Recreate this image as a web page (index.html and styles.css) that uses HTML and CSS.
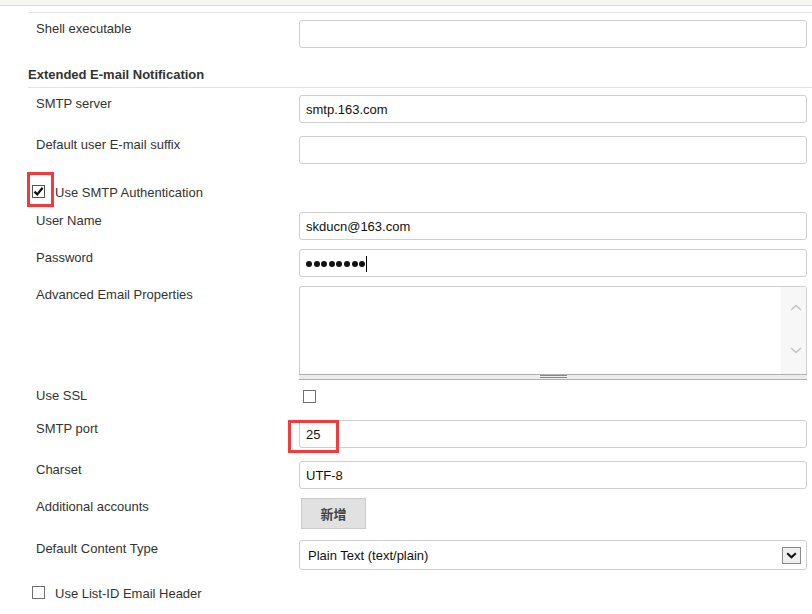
FILE: index.html
```html
<!DOCTYPE html>
<html lang="en">
<head>
<meta charset="utf-8">
<title>Extended E-mail Notification</title>
<link rel="stylesheet" href="styles.css">
</head>
<body>
<div class="page">
  <div class="topbar"></div>
  <div class="form">
    <div class="rule"></div>

    <div class="row row-shell">
      <div class="label">Shell executable</div>
      <div class="field"></div>
    </div>

    <div class="section">Extended E-mail Notification</div>

    <div class="row row-smtp">
      <div class="label">SMTP server</div>
      <div class="field">smtp.163.com</div>
    </div>

    <div class="row row-gap13">
      <div class="label">Default user E-mail suffix</div>
      <div class="field"></div>
    </div>

    <div class="check-row row-auth">
      <span class="box checked">
        <svg width="11" height="11" viewBox="0 0 11 11"><path d="M1.5 5.6 L4.3 8.4 L9.6 1.8" fill="none" stroke="#111" stroke-width="2.2"/></svg>
      </span>
      <span class="check-label">Use SMTP Authentication</span>
    </div>

    <div class="row row-user">
      <div class="label">User Name</div>
      <div class="field">skducn@163.com</div>
    </div>

    <div class="row row-gap9">
      <div class="label">Password</div>
      <div class="field">
        <span class="dots"><i></i><i></i><i></i><i></i><i></i><i></i><i></i><i></i></span><span class="caret"></span>
      </div>
    </div>

    <div class="row row-gap9">
      <div class="label">Advanced Email Properties</div>
      <div class="textarea">
        <div class="ta-body">
          <div class="ta-scroll">
            <svg class="chev-up" width="12" height="7" viewBox="0 0 12 7"><path d="M1 6 L6 1.5 L11 6" fill="none" stroke="#c4c4c4" stroke-width="1.6"/></svg>
            <svg class="chev-down" width="12" height="7" viewBox="0 0 12 7"><path d="M1 1 L6 5.5 L11 1" fill="none" stroke="#c4c4c4" stroke-width="1.6"/></svg>
          </div>
        </div>
        <div class="ta-grip"><span></span></div>
      </div>
    </div>

    <div class="row row-ssl">
      <div class="label">Use SSL</div>
      <div class="ctl"><span class="box ssl-box"></span></div>
    </div>

    <div class="row row-port">
      <div class="label">SMTP port</div>
      <div class="field">25</div>
    </div>

    <div class="row row-gap13">
      <div class="label">Charset</div>
      <div class="field">UTF-8</div>
    </div>

    <div class="row row-gap9">
      <div class="label">Additional accounts</div>
      <div class="ctl"><span class="button">新增</span></div>
    </div>

    <div class="row row-select">
      <div class="label">Default Content Type</div>
      <div class="select">
        <span>Plain Text (text/plain)</span>
        <span class="sel-arrow">
          <svg width="11" height="7" viewBox="0 0 11 7"><path d="M1.2 1.2 L5.5 5.3 L9.8 1.2" fill="none" stroke="#111" stroke-width="2"/></svg>
        </span>
      </div>
    </div>

    <div class="check-row row-listid">
      <span class="box"></span>
      <span class="check-label">Use List-ID Email Header</span>
    </div>
  </div>

  <div class="mark mark-auth"></div>
  <div class="mark mark-port"></div>
</div>
</body>
</html>
```

FILE: styles.css
```css
html, body {
  margin: 0;
  padding: 0;
  background: #fff;
}

body {
  font-family: "Liberation Sans", Arial, "Noto Sans CJK SC", sans-serif;
  font-size: 13px;
  color: #333;
}

.page {
  position: relative;
  width: 812px;
  height: 614px;
  overflow: hidden;
}

.topbar {
  height: 5px;
  background: #f6f8f0;
  border-bottom: 1px solid #dcdcdc;
}

.form {
  display: flex;
  flex-direction: column;
  padding-left: 28px;
}

.rule {
  margin-top: 6px;
  border-top: 1px solid #e3e3e3;
}

.row {
  display: grid;
  grid-template-columns: 271px 508px;
  align-items: start;
}

.label {
  padding: 1px 0 0 8px;
  line-height: 15px;
  color: #333;
}

.field {
  box-sizing: border-box;
  height: 28px;
  border: 1px solid #cfcfcf;
  border-radius: 3px;
  padding: 1px 6px 0 6px;
  display: flex;
  align-items: center;
  color: #111;
  background: #fff;
  line-height: 15px;
}

.row-shell { margin-top: 7px; }
.row-smtp { margin-top: 7px; }
.row-gap13 { margin-top: 13px; }
.row-gap9 { margin-top: 9px; }
.row-select { margin-top: 11px; }
.row-user { margin-top: 13px; }
.row-ssl { margin-top: 7px; }
.row-port { margin-top: 17px; }

.section {
  padding: 19px 0 5px 0;
  line-height: 15px;
  font-weight: bold;
  color: #333;
  border-bottom: 1px solid #e3e3e3;
}

.check-row {
  display: flex;
  align-items: center;
  height: 15px;
  padding-left: 4px;
  line-height: 15px;
}

.row-auth { margin-top: 20px; }
.row-listid { margin-top: 15px; }

.check-label {
  margin-left: 10px;
  padding-top: 1px;
  color: #333;
}

.box {
  box-sizing: border-box;
  width: 13px;
  height: 13px;
  border: 1px solid #707070;
  background: #fff;
  display: inline-flex;
  align-items: center;
  justify-content: center;
  flex: none;
}

.box.checked {
  border-color: #555;
}

.ctl {
  display: flex;
}

.ssl-box {
  margin: 3px 0 0 4px;
}

.dots {
  display: inline-flex;
  gap: 1.6px;
}

.dots i {
  display: block;
  width: 6px;
  height: 6px;
  border-radius: 50%;
  background: #111;
}

.caret {
  display: inline-block;
  width: 1px;
  height: 16px;
  background: #000;
  margin-left: 1px;
}

.textarea {
  box-sizing: border-box;
  height: 94px;
  border: 1px solid #cfcfcf;
  border-bottom: none;
  border-radius: 3px 3px 0 0;
  display: flex;
  flex-direction: column;
  background: #fff;
}

.ta-body {
  flex: 1;
  display: flex;
  justify-content: flex-end;
}

.ta-scroll {
  width: 25px;
  background: #f7f7f7;
  display: flex;
  flex-direction: column;
  align-items: center;
}

.chev-up {
  margin-top: 17px;
  margin-left: 4px;
}

.chev-down {
  margin-top: 36px;
  margin-left: 4px;
}

.ta-grip {
  box-sizing: border-box;
  height: 6px;
  margin: 0 -1px;
  background: #ececec;
  border-top: 1px solid #b0b0b0;
  border-bottom: 1px solid #b0b0b0;
  display: flex;
  justify-content: center;
}

.ta-grip span {
  display: block;
  width: 27px;
  height: 3px;
  box-sizing: border-box;
  border-top: 1px solid #888;
  border-bottom: 1px solid #888;
}

.button {
  box-sizing: border-box;
  width: 65px;
  height: 31px;
  margin-left: 2px;
  background: #e1e1e1;
  border: 1px solid #cbcbcb;
  color: #444;
  font-family: "Noto Sans CJK SC", "Liberation Sans", sans-serif;
  font-size: 13px;
  font-weight: bold;
  display: flex;
  align-items: center;
  justify-content: center;
}

.select {
  box-sizing: border-box;
  height: 30px;
  border: 1px solid #cfcfcf;
  border-radius: 3px;
  padding: 0 5px 0 8px;
  display: flex;
  align-items: center;
  justify-content: space-between;
  color: #111;
  background: #fff;
}

.sel-arrow {
  box-sizing: border-box;
  width: 19px;
  height: 17px;
  border: 1px solid #8a8a8a;
  background: #efefef;
  display: flex;
  align-items: center;
  justify-content: center;
}

.mark {
  position: absolute;
  box-sizing: border-box;
  border: 3px solid #f33b3b;
}

.mark-auth {
  left: 27px;
  top: 172px;
  width: 27px;
  height: 35px;
}

.mark-port {
  left: 288px;
  top: 420px;
  width: 51px;
  height: 33px;
}
```
